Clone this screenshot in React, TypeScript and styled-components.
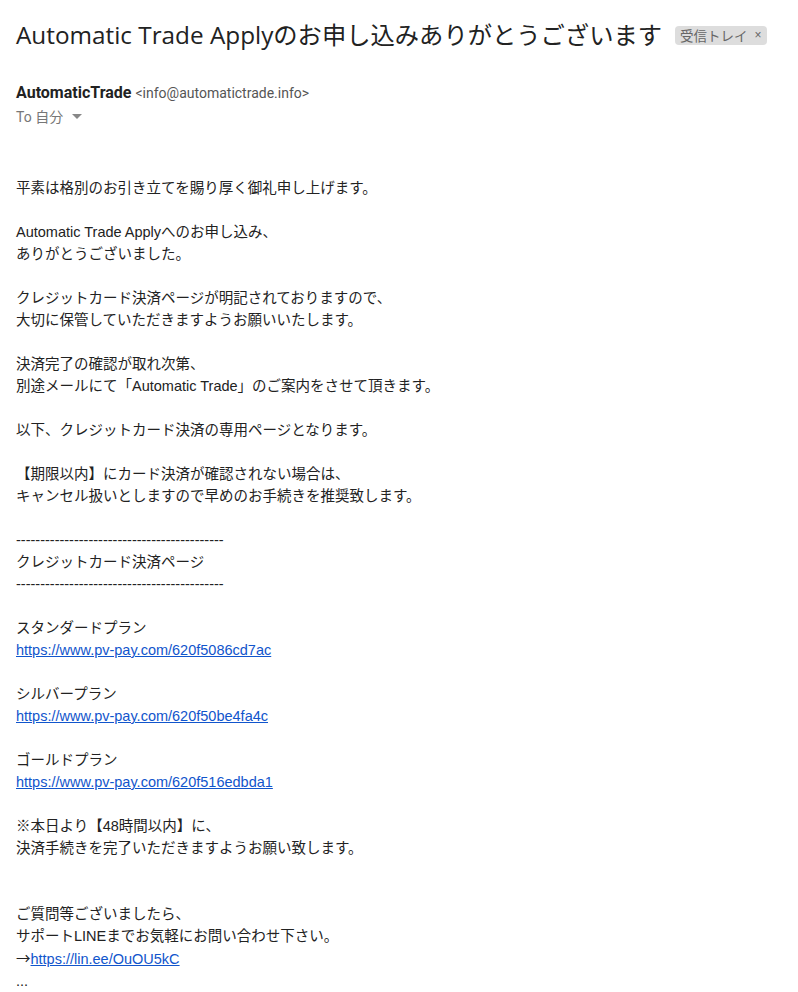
import React from 'react';
import styled, { createGlobalStyle } from 'styled-components';

const GlobalStyle = createGlobalStyle`
  html, body {
    margin: 0;
    padding: 0;
    background: #fff;
  }
  body {
    font-family: Arial, "Liberation Sans", "Noto Sans CJK JP", sans-serif;
    color: #222;
  }
`;

const Page = styled.div`
  width: 798px;
  padding: 0 16px;
  box-sizing: border-box;
`;

const SubjectRow = styled.div`
  display: flex;
  align-items: center;
  gap: 13px;
  height: 66px;
`;

const Subject = styled.h2`
  margin: 0;
  font-family: "Open Sans", "Noto Sans CJK JP", sans-serif;
  font-size: 24.3px;
  font-weight: 400;
  color: #222;
  white-space: nowrap;
`;

const Label = styled.span`
  display: inline-flex;
  align-items: center;
  gap: 7px;
  height: 19px;
  padding: 0 5px;
  margin-top: 4px;
  border-radius: 4px;
  background: #ddd;
  color: #666;
  font-family: "Liberation Sans", "Noto Sans CJK JP", sans-serif;
  font-size: 13.5px;
`;

const Close = styled.span`
  font-size: 12px;
  color: #666;
`;

const SenderBlock = styled.div`
  padding-top: 17px;
  display: flex;
  flex-direction: column;
  gap: 4px;
`;

const SenderLine = styled.div`
  display: flex;
  align-items: baseline;
  gap: 4px;
  font-family: Roboto, "Noto Sans CJK JP", sans-serif;
`;

const SenderName = styled.span`
  font-size: 16px;
  font-weight: 700;
  color: #222;
`;

const SenderMail = styled.span`
  font-size: 14px;
  color: #555;
`;

const Recipient = styled.div`
  display: flex;
  align-items: center;
  gap: 8px;
  font-family: Roboto, "Noto Sans CJK JP", sans-serif;
  font-size: 14px;
  color: #777;
`;

const Caret = styled.span`
  width: 0;
  height: 0;
  margin-left: 1px;
  border-left: 5px solid transparent;
  border-right: 5px solid transparent;
  border-top: 5px solid #888;
`;

const Body = styled.div`
  padding-top: 51px;
  font-family: Arial, "Liberation Sans", "Noto Sans CJK JP", sans-serif;
  font-size: 14.5px;
  line-height: 22px;
  color: #222;
`;

const Line = styled.div<{ $gap?: number }>`
  min-height: 22px;
  white-space: nowrap;
  margin-top: ${({ $gap }) => ($gap ? $gap * 22 : 0)}px;
`;

const Arrow = styled.span`
  font-family: "Noto Sans CJK JP", sans-serif;
`;

const Link = styled.a`
  color: #15c;
  text-decoration: underline;
`;

const DASH = '-'.repeat(43);

const App = () => (
  <Page>
    <GlobalStyle />
    <SubjectRow>
      <Subject>Automatic Trade Applyのお申し込みありがとうございます</Subject>
      <Label>
        受信トレイ <Close>×</Close>
      </Label>
    </SubjectRow>

    <SenderBlock>
      <SenderLine>
        <SenderName>AutomaticTrade</SenderName>
        <SenderMail>&lt;info@automatictrade.info&gt;</SenderMail>
      </SenderLine>
      <Recipient>
        To 自分 <Caret />
      </Recipient>
    </SenderBlock>

    <Body>
      <Line>平素は格別のお引き立てを賜り厚く御礼申し上げます。</Line>

      <Line $gap={1}>Automatic Trade Applyへのお申し込み、</Line>
      <Line>ありがとうございました。</Line>

      <Line $gap={1}>クレジットカード決済ページが明記されておりますので、</Line>
      <Line>大切に保管していただきますようお願いいたします。</Line>

      <Line $gap={1}>決済完了の確認が取れ次第、</Line>
      <Line>別途メールにて「Automatic Trade」のご案内をさせて頂きます。</Line>

      <Line $gap={1}>以下、クレジットカード決済の専用ページとなります。</Line>

      <Line $gap={1}>【期限以内】にカード決済が確認されない場合は、</Line>
      <Line>キャンセル扱いとしますので早めのお手続きを推奨致します。</Line>

      <Line $gap={1}>{DASH}</Line>
      <Line>クレジットカード決済ページ</Line>
      <Line>{DASH}</Line>

      <Line $gap={1}>スタンダードプラン</Line>
      <Line>
        <Link href="#">https://www.pv-pay.com/620f5086cd7ac</Link>
      </Line>

      <Line $gap={1}>シルバープラン</Line>
      <Line>
        <Link href="#">https://www.pv-pay.com/620f50be4fa4c</Link>
      </Line>

      <Line $gap={1}>ゴールドプラン</Line>
      <Line>
        <Link href="#">https://www.pv-pay.com/620f516edbda1</Link>
      </Line>

      <Line $gap={1}>※本日より【48時間以内】に、</Line>
      <Line>決済手続きを完了いただきますようお願い致します。</Line>

      <Line $gap={2}>ご質問等ございましたら、</Line>
      <Line>サポートLINEまでお気軽にお問い合わせ下さい。</Line>
      <Line>
        <Arrow>→</Arrow>
        <Link href="#">https://lin.ee/OuOU5kC</Link>
      </Line>
      <Line>...</Line>
    </Body>
  </Page>
);

export default App;
